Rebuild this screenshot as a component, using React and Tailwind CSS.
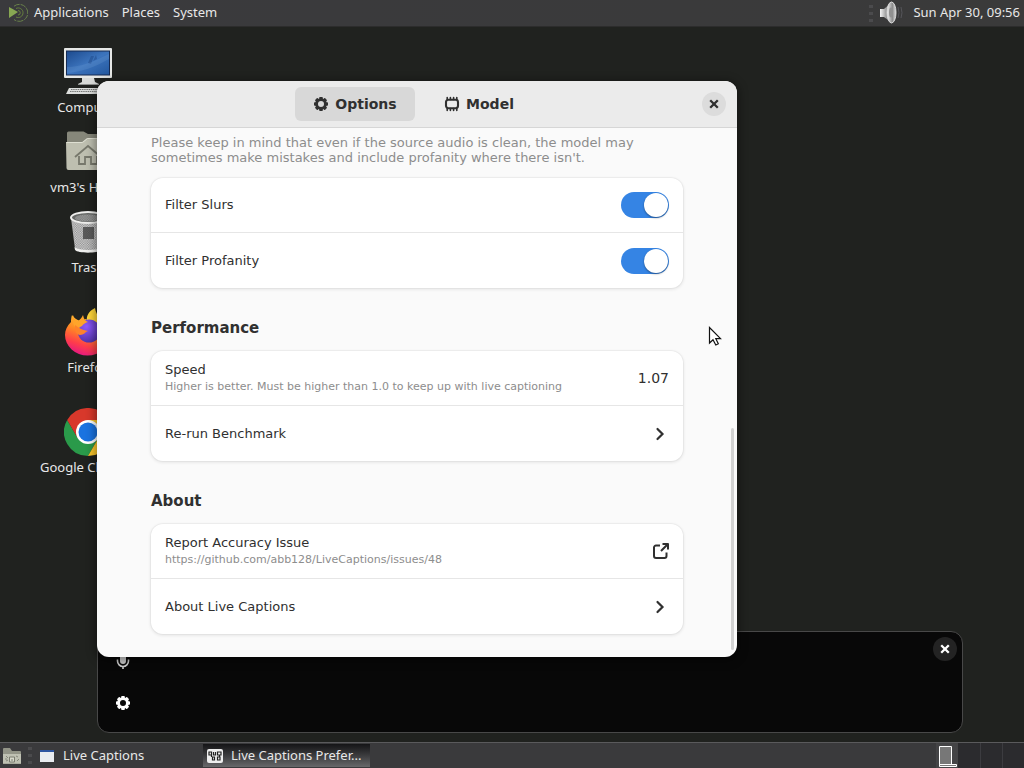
import React, { useState } from 'react';

function GearIcon({ className }) {
  return (
    <svg viewBox="0 0 16 16" className={className} fill="currentColor">
      {[0, 45, 90, 135].map((angle) => (
        <g key={angle} transform={`rotate(${angle} 8 8)`}>
          <rect x="6.2" y="1" width="3.6" height="3.2" rx="0.8" />
          <rect x="6.2" y="11.8" width="3.6" height="3.2" rx="0.8" />
        </g>
      ))}
      <circle cx="8" cy="8" r="4.4" fill="none" stroke="currentColor" strokeWidth="2.8" />
    </svg>
  );
}

function ChipIcon({ className }) {
  return (
    <svg viewBox="0 0 16 16" className={className} fill="none" stroke="currentColor">
      <rect x="2" y="3.8" width="12" height="8.4" rx="2.4" strokeWidth="2.1" />
      <path d="M3.200 1.500v2M6.400 1.500v2M9.600 1.500v2M12.800 1.500v2M3.200 12.500v2M6.400 12.500v2M9.600 12.500v2M12.800 12.500v2" strokeWidth="1.600" strokeLinecap="round" />
    </svg>
  );
}

function CloseIcon({ className }) {
  return (
    <svg viewBox="0 0 16 16" className={className} fill="none" stroke="currentColor" strokeWidth="2.3">
      <path d="M4.2 4.2l7.6 7.6M11.800 4.200l-7.600 7.600" />
    </svg>
  );
}

function ChevronIcon() {
  return (
    <svg viewBox="0 0 16 16" className="size-4" fill="none" stroke="currentColor" strokeWidth="2.200" strokeLinecap="round">
      <path d="M4.500 3l5 5-5 5" />
    </svg>
  );
}

function ExternalIcon() {
  return (
    <svg viewBox="0 0 16 16" className="size-4" fill="none" stroke="currentColor" strokeWidth="2" strokeLinejoin="round">
      <path d="M7 2.500H3a2 2 0 0 0-2 2V13a2 2 0 0 0 2 2h8.500a2 2 0 0 0 2-2V9.500" />
      <path d="M9.500 1H15v5.500M14.700 1.300L8 8" />
    </svg>
  );
}

function MicIcon() {
  return (
    <svg viewBox="0 0 16 16" className="size-4" fill="none" stroke="currentColor" strokeWidth="1.600">
      <rect x="5" y="0" width="6" height="11" rx="3" fill="currentColor" stroke="none" />
      <path d="M2.500 6.500V8a5.500 5.500 0 0 0 11 0V6.500M8 13.500V16" />
    </svg>
  );
}

function ComputerIcon() {
  return (
    <svg viewBox="0 0 48 48" className="size-12">
      <defs>
        <linearGradient id="screen" x1="0" y1="0" x2="1" y2="1">
          <stop offset="0" stopColor="#1d4b8f" />
          <stop offset="0.5" stopColor="#3c74bd" />
          <stop offset="1" stopColor="#23589f" />
        </linearGradient>
      </defs>
      <rect x="0" y="0" width="48" height="30" rx="1" fill="#e6e8e6" />
      <rect x="2" y="2.500" width="44" height="25" fill="#152a52" />
      <rect x="3" y="3.500" width="42" height="23" fill="url(#screen)" />
      <path d="M27 8l-3 7 3 1 3-8zM32 7l-3 6 4-2z" fill="#234f8f" opacity="0.6" />
      <path d="M3 19c14 0 26-5 42-13v5C31 19 17 24 3 25z" fill="#7eaade" opacity="0.2" />
      <path d="M18 30h12l1 4 4 2H14l4-2z" fill="#d8dad8" />
      <path d="M14 36h21v1H14z" fill="#8e908e" />
      <path d="M5 40h38l3 6H2z" fill="#dcdedc" />
      <path d="M7 41.500h34M6 43.500h36" stroke="#777977" strokeWidth="1.200" strokeDasharray="1.500 0.700" />
    </svg>
  );
}

function HomeIcon() {
  return (
    <svg viewBox="0 0 48 48" className="size-12">
      <path d="M3 5a1.500 1.500 0 0 1 1.500-1.500h15L24 6h19a2 2 0 0 1 2 2v33H3z" fill="#86877a" />
      <path d="M2 14h16l5-4h22a1.500 1.500 0 0 1 1.500 1.500V40a2 2 0 0 1-2 2H4.500a2 2 0 0 1-2-2z" fill="#bebfb0" />
      <path d="M2.500 14.500h16l5-4H45" fill="none" stroke="#dedfd2" />
      <path d="M11 29l13-11 13 11M15 28v8h6v-7h6v7h6v-8" fill="none" stroke="#77786c" strokeWidth="1.800" />
    </svg>
  );
}

function TrashIcon() {
  return (
    <svg viewBox="0 0 48 48" className="size-12">
      <defs>
        <pattern id="mesh" width="2.400" height="2.400" patternUnits="userSpaceOnUse">
          <rect width="2.400" height="2.400" fill="#d5d5d5" />
          <rect width="1.200" height="1.200" fill="#8c8c8c" />
          <rect x="1.200" y="1.200" width="1.200" height="1.200" fill="#8c8c8c" />
        </pattern>
      </defs>
      <path d="M7 10l4 31c1 4 25 4 26 0l4-31z" fill="url(#mesh)" />
      <path d="M19 19h11v12H19z" fill="#444" opacity="0.8" />
      <ellipse cx="24" cy="9.500" rx="17" ry="5.500" fill="#666866" stroke="#eeeeec" strokeWidth="2" />
      <ellipse cx="24" cy="10" rx="13" ry="3.500" fill="url(#mesh)" opacity="0.5" />
      <path d="M10.500 39c3 4 24 4 27 0l-.5 3c-3 3.500-23 3.500-26 0z" fill="#f0f0ee" />
    </svg>
  );
}

function FirefoxIcon() {
  return (
    <svg viewBox="0 0 48 48" className="size-12">
      <defs>
        <linearGradient id="fox" x1="0.700" y1="0" x2="0.300" y2="1">
          <stop offset="0" stopColor="#ffd83a" />
          <stop offset="0.450" stopColor="#ff8a24" />
          <stop offset="0.750" stopColor="#ff3d4a" />
          <stop offset="1" stopColor="#e31587" />
        </linearGradient>
        <radialGradient id="globe" cx="0.400" cy="0.300" r="0.800">
          <stop offset="0" stopColor="#9059ff" />
          <stop offset="1" stopColor="#4b2fa0" />
        </radialGradient>
      </defs>
      <path d="M31 0c-6 3-9 8-8 13l17 8c0-9-8-12-9-21z" fill="#ffd63a" />
      <path d="M8 7c-1 3-1 5-1 7-4 4-6 8-6 13a22 20 0 0 0 45 0c0-8-4-14-9-17 2 5 1 9-1 11L22 11l-6 2c-3-1-6-3-8-6z" fill="url(#fox)" />
      <circle cx="25" cy="23" r="11.500" fill="url(#globe)" />
      <path d="M9 7c1 4 3 6 5 6 3-2 4-4 5-6 1 4 2 6 5 7-3 1-5 2-6 4-2 1-4 2-4 5-4-4-6-8-5-16z" fill="#ffa42a" />
      <path d="M11 17c4 3 7 5 13 6-3 1-4 4-8 4-3 0-6-4-5-10z" fill="#ff822b" />
    </svg>
  );
}

function ChromeIcon() {
  return (
    <svg viewBox="0 0 48 48" className="size-12">
      <path d="M3.200 12A24 24 0 0 0 24 48l10.400-18L24 24 13.600 30z" fill="#2a9a4a" />
      <path d="M44.800 12A24 24 0 0 1 24 48l10.400-18L24 12z" fill="#fbc72b" />
      <path d="M24 12h20.800A24 24 0 0 0 3.200 12l10.400 18z" fill="#d8382b" />
      <circle cx="24" cy="24" r="12" fill="#fff" />
      <circle cx="24" cy="24" r="9.500" fill="#1a73e0" />
    </svg>
  );
}

function MenuLogo() {
  return (
    <svg viewBox="0 0 20 20" className="size-5" fill="none">
      <path d="M1 4l9 5-9 6z" fill="#87a752" />
      <path d="M6 3.200A8.500 8.500 0 1 1 6 16.500" stroke="#68804a" strokeDasharray="6 1" />
      <path d="M8 5.500a4.800 4.800 0 1 1 0 8.500" stroke="#66803f" />
      <path d="M10 7.500a2 2 0 0 1 0 4.500" stroke="#66803f" />
    </svg>
  );
}

function SpeakerIcon() {
  return (
    <svg viewBox="0 0 24 24" className="size-6">
      <defs>
        <linearGradient id="cone">
          <stop offset="0" stopColor="#f4f4f4" />
          <stop offset="0.600" stopColor="#8c8c8c" />
          <stop offset="1" stopColor="#dedede" />
        </linearGradient>
      </defs>
      <path d="M1 8h4l8-7v21l-8-6H1z" fill="url(#cone)" />
      <ellipse cx="12.500" cy="11.500" rx="4.500" ry="10.500" fill="url(#cone)" stroke="#d8d8d8" />
      <ellipse cx="12" cy="11.500" rx="2" ry="5" fill="#909090" />
      <path d="M19 6q2 6 0 11M22 6q2 6 0 11" stroke="#55555a" fill="none" />
    </svg>
  );
}

function ShowDesktopIcon() {
  return (
    <svg viewBox="0 0 20 18" className="h-[18px] w-5">
      <path d="M1 2a1 1 0 0 1 1-1h6l2 3h8a1 1 0 0 1 1 1v12H1z" fill="#929487" />
      <path d="M1 7h18v9.500H1z" fill="#bfc1b3" />
      <path d="M4 9l2 2M14 9l2 1M4 14l2-1M15 14l2-2M3 12h2" stroke="#85877a" />
      <path d="M7.500 10h5v5h-5zM10 12v2" fill="#d6d8cb" stroke="#7b7d70" />
    </svg>
  );
}

function PrefsTaskIcon() {
  return (
    <svg viewBox="0 0 16 16" className="size-4 shrink-0" fill="none" stroke="#222" strokeWidth="1.200">
      <rect x="0" y="1" width="16" height="14" rx="2" fill="#eee" stroke="none" />
      <path d="M2 4h2.500v3H2zM4.500 7v2M6.500 4v3h2V4M7.500 9v3h-2V9zM10.500 4H14v3h-3.500zM12.500 7v2M10.500 9H13v3h-2.500z" />
    </svg>
  );
}

function Grip() {
  return (
    <div className="flex w-1 flex-col gap-1">
      <span className="h-[3px] bg-[#4b4b4d]" />
      <span className="h-[3px] bg-[#4b4b4d]" />
      <span className="h-[3px] bg-[#4b4b4d]" />
    </div>
  );
}

const shortcuts = [
  { name: 'Computer', icon: ComputerIcon, place: 'top-[21px]' },
  { name: "vm3's Home", icon: HomeIcon, place: 'top-[101px]' },
  { name: 'Trash', icon: TrashIcon, place: 'top-[181px]' },
  { name: 'Firefox', icon: FirefoxIcon, place: 'top-[281px]' },
  { name: 'Google Chrome', icon: ChromeIcon, place: 'top-[381px]' },
];

function TopPanel() {
  return (
    <header className="flex h-[27px] shrink-0 items-center justify-between border-b border-[#2c2c2c] bg-linear-to-r from-[#3a3a3d] to-[#3a3a3a] pr-1 pl-2">
      <nav className="flex items-center gap-[13px]">
        <button className="flex items-center gap-1.5"><MenuLogo />Applications</button>
        <button>Places</button>
        <button>System</button>
      </nav>
      <div className="flex items-center gap-2.5">
        <div className="flex items-center gap-1.5">
          <Grip />
          <button aria-label="Volume"><SpeakerIcon /></button>
        </div>
        <button>Sun Apr 30, 09:56</button>
      </div>
    </header>
  );
}

function BottomPanel() {
  return (
    <footer className="flex h-[26px] shrink-0 items-stretch border-t border-[#5a5a5c] bg-[#3a3a3c] pl-0.5">
      <button aria-label="Show desktop" className="mr-1.5 flex items-center"><ShowDesktopIcon /></button>
      <div className="mr-1 flex items-center"><Grip /></div>
      <button className="flex w-[167px] items-center gap-2 pl-1">
        <span className="mr-px h-3 w-3.5 border-t-2 border-[#2d55a0] bg-[#e9ecf0]" />
        Live Captions
      </button>
      <button className="my-px flex w-[167px] items-center gap-2 bg-linear-to-b from-[#151517] to-[#68686a] pl-1">
        <PrefsTaskIcon />
        <span className="truncate">Live Captions Prefer...</span>
      </button>
      <div className="ml-auto flex items-stretch">
        <button aria-label="Workspace 1" className="w-[22px] bg-[#444446]">
          <svg viewBox="0 0 22 25" className="h-[25px] w-[22px]" fill="#777" stroke="#fff">
            <path d="M3.500 3.500h12v18h-12zM3.500 21.500h17v2h-17z" />
          </svg>
        </button>
        <button aria-label="Workspace 2" className="w-[23px] border-r border-[#3c3c40] bg-[#2b2b2e]" />
        <button aria-label="Workspace 3" className="w-[22px] border-r border-[#3c3c40] bg-[#2b2b2e]" />
        <button aria-label="Workspace 4" className="w-[21px] bg-[#2b2b2e]" />
      </div>
    </footer>
  );
}

function CaptionsWindow() {
  return (
    <section className="absolute top-[604px] right-[61px] left-[97px] flex h-[102px] justify-between rounded-xl border border-[#484848] bg-[#080808] text-white">
      <div className="flex flex-col gap-[26px] pt-[21px] pl-[17px]">
        <button aria-label="Microphone" className="text-[#d0d0d0]"><MicIcon /></button>
        <button aria-label="Preferences"><GearIcon className="size-4" /></button>
      </div>
      <button aria-label="Close captions" className="mt-[5px] mr-[5px] flex size-6 items-center justify-center rounded-full bg-[#232323]">
        <CloseIcon className="size-4" />
      </button>
    </section>
  );
}

function Group({ title, children }) {
  return (
    <section>
      {title && <h2 className="mt-8 mb-3.5 text-[15px] leading-[17px] font-bold">{title}</h2>}
      <div className="divide-y divide-[#e6e6e6] rounded-xl bg-white shadow-[0_0_0_1px_rgba(0,0,0,0.03),0_1px_3px_1px_rgba(0,0,0,0.07)]">
        {children}
      </div>
    </section>
  );
}

const rowClass = 'flex min-h-[55px] w-full items-center justify-between px-3.5 text-left';

function SwitchRow({ label, defaultChecked }) {
  const [checked, setChecked] = useState(defaultChecked);

  return (
    <label className={rowClass}>
      {label}
      <input
        type="checkbox"
        role="switch"
        checked={checked}
        onChange={(e) => setChecked(e.target.checked)}
        className="flex h-[26px] w-12 appearance-none items-center rounded-full bg-[#c8c8c8] p-px before:size-6 before:rounded-full before:bg-white before:shadow-[0_1px_2px_rgba(0,0,0,0.4)] checked:justify-end checked:bg-[#3584e4]"
      />
    </label>
  );
}

function RowText({ title, subtitle }) {
  return (
    <span className="flex flex-col">
      <span className="leading-[18px]">{title}</span>
      {subtitle && <span className="text-[11px] leading-4 text-[#8d8d8d]">{subtitle}</span>}
    </span>
  );
}

function PreferencesWindow() {
  const [tab, setTab] = useState('options');
  const tabClass = 'flex h-[34px] w-[120px] items-center justify-center gap-1.5 rounded-md';

  return (
    <section className="absolute top-[54px] left-[97px] w-[640px] overflow-hidden rounded-xl bg-[#fafafa] font-['DejaVu_Sans',sans-serif] text-[13px] text-[#303030] shadow-[0_2px_10px_2px_rgba(0,0,0,0.4)]">
      <header className="grid h-[47px] grid-cols-[1fr_auto_1fr] items-center border-b border-[#d6d6d6] bg-[#ebebeb] px-[11px]">
        <div className="col-start-2 flex gap-1 text-[14px] font-bold">
          <button onClick={() => setTab('options')} className={`${tabClass} ${tab === 'options' ? 'bg-[#d8d8d8]' : ''}`}>
            <GearIcon className="size-4" />Options
          </button>
          <button onClick={() => setTab('model')} className={`${tabClass} ${tab === 'model' ? 'bg-[#d8d8d8]' : ''}`}>
            <ChipIcon className="size-4" />Model
          </button>
        </div>
        <button aria-label="Close" className="flex size-6 items-center justify-center justify-self-end rounded-full bg-[#dcdcdc]">
          <CloseIcon className="size-4" />
        </button>
      </header>

      <main className="px-[54px] pt-[7px] pb-[23px]">
        <p className="mb-[13px] leading-[15px] text-[#8d8d8d]">
          Please keep in mind that even if the source audio is clean, the model may sometimes make mistakes and include profanity where there isn't.
        </p>

        <Group>
          <SwitchRow label="Filter Slurs" defaultChecked />
          <SwitchRow label="Filter Profanity" defaultChecked />
        </Group>

        <Group title="Performance">
          <div className={rowClass}>
            <RowText title="Speed" subtitle="Higher is better. Must be higher than 1.0 to keep up with live captioning" />
            <span className="text-[14px]">1.07</span>
          </div>
          <button className={rowClass}>
            <RowText title="Re-run Benchmark" />
            <ChevronIcon />
          </button>
        </Group>

        <Group title="About">
          <a href="https://github.com/abb128/LiveCaptions/issues/48" className={rowClass}>
            <RowText title="Report Accuracy Issue" subtitle="https://github.com/abb128/LiveCaptions/issues/48" />
            <ExternalIcon />
          </a>
          <button className={rowClass}>
            <RowText title="About Live Captions" />
            <ChevronIcon />
          </button>
        </Group>
      </main>

      {/* Scroll position */}
      <div className="absolute right-[3px] bottom-[7px] h-[222px] w-[3px] rounded-full bg-[#d2d2d2]" />
    </section>
  );
}

function App() {
  return (
    <div className="flex h-screen flex-col overflow-hidden bg-[#20221f] font-['Noto_Sans',sans-serif] text-[13px] text-[#e8e8e8]">
      <TopPanel />

      <div className="relative flex-1">
        {shortcuts.map(({ name, icon: Icon, place }) => (
          <button key={name} className={`absolute left-[38px] flex w-[100px] flex-col items-center gap-0.5 whitespace-nowrap ${place}`}>
            <Icon />
            {name}
          </button>
        ))}
        <CaptionsWindow />
        <PreferencesWindow />

        {/* Mouse pointer */}
        <svg viewBox="0 0 14 21" className="absolute top-[299px] left-[708px] h-[21px] w-3.5" fill="#fff" stroke="#111" strokeWidth="1.200">
          <path d="M1.500 1.500v15.500l3.500-3.300 2.800 5.300 2.500-1.200-2.500-5.100h4.700z" />
        </svg>
      </div>

      <BottomPanel />
    </div>
  );
}

export default App;
